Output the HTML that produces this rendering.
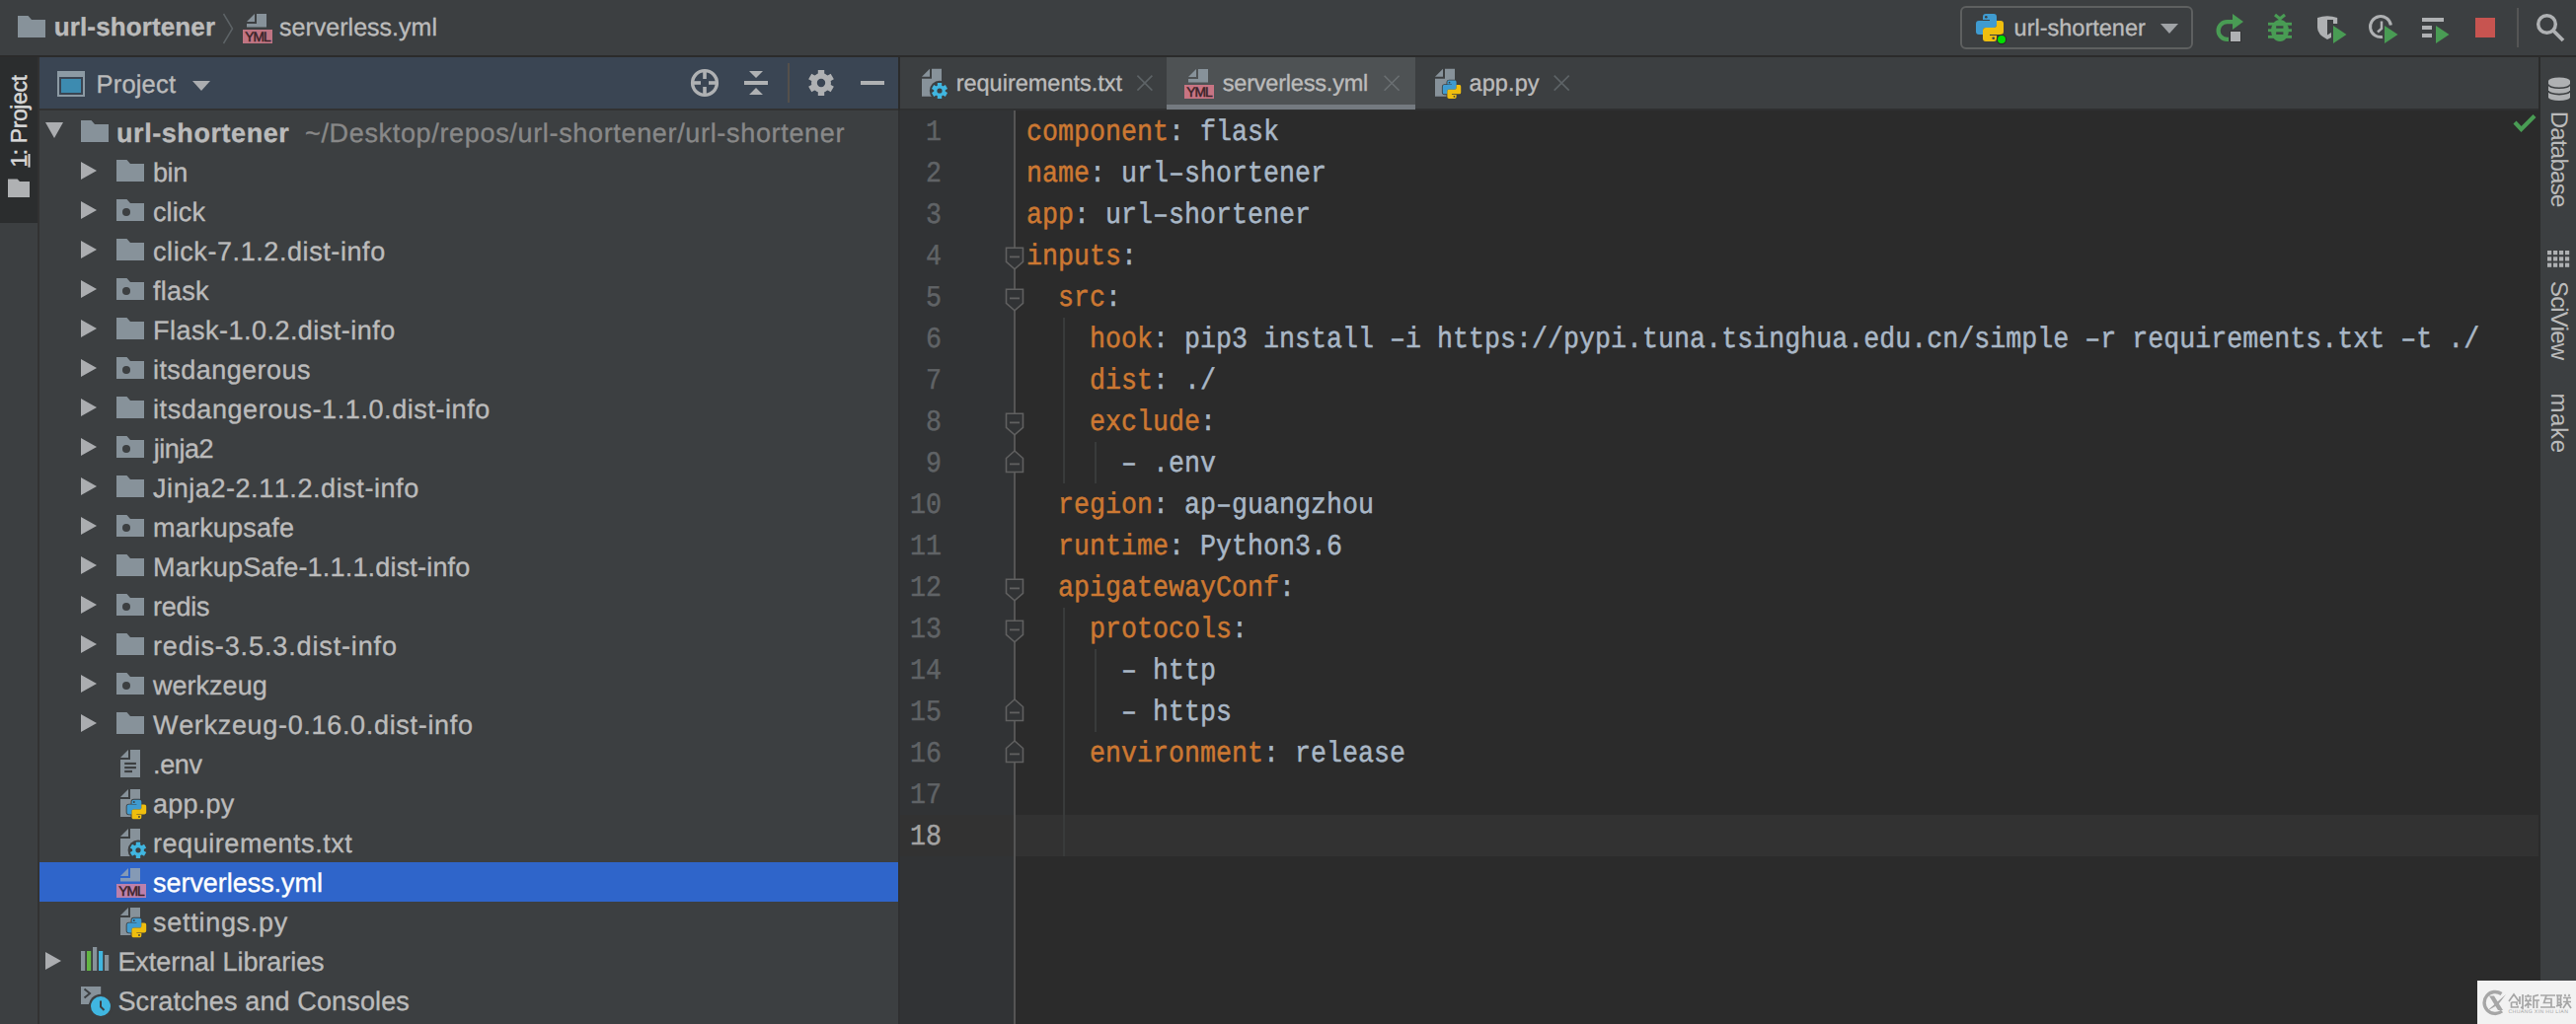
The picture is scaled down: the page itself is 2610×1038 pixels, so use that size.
<!DOCTYPE html>
<html><head><meta charset="utf-8"><style>
html,body{margin:0;padding:0;background:#3C3F41;}
body{width:2610px;height:1038px;overflow:hidden;}
svg{display:block;font-family:"Liberation Sans", sans-serif;font-kerning:none;text-rendering:geometricPrecision;}
text{font-kerning:none;}
</style></head><body>
<svg width="2610" height="1038" viewBox="0 0 2610 1038">
<rect x="0" y="0" width="2610" height="1038" fill="#3C3F41" />
<rect x="0" y="56" width="2610" height="2" fill="#2B2B2B" />
<rect x="38" y="58" width="2" height="980" fill="#323232" />
<rect x="0" y="58" width="38" height="168" fill="#2B2D2E" />
<rect x="40" y="58" width="870" height="52" fill="#3A4553" />
<rect x="40" y="110" width="870" height="2" fill="#323232" />
<rect x="910" y="58" width="2" height="54" fill="#2B2B2B" />
<rect x="910" y="112" width="2" height="926" fill="#2F3031" />
<rect x="912" y="110" width="1660" height="2" fill="#2F3031" />
<rect x="912" y="112" width="116" height="926" fill="#313335" />
<rect x="1029" y="112" width="1543" height="926" fill="#2B2B2B" />
<rect x="1027" y="112" width="2" height="926" fill="#555555" />
<rect x="2572" y="58" width="2" height="980" fill="#2B2B2B" />
<path d="M18,16 h10.5 l3.5,4 h14 v18 h-28 z" fill="#87929A"/>
<text x="54.80" y="36.00" font-size="26" fill="#BBBBBB" letter-spacing="0.117" font-weight="bold"  stroke="#BBBBBB" stroke-width="0.35">url-shortener</text>
<path d="M226.5,14 L235.5,29 L226.5,44" fill="none" stroke="#5D6366" stroke-width="1.5"/>
<path d="M258,14 L250,22 H258 Z" fill="#87929A"/>
<path d="M260,14 H270 V27.5 H250 V24 H260 Z" fill="#87929A"/>
<rect x="246" y="30" width="30" height="14" fill="#C07482"/>
<text x="248.20" y="41.50" font-size="13.8" fill="#3A2329" letter-spacing="-0.936" stroke="#3A2329" stroke-width="0.5">YML</text>
<text x="283.00" y="36.00" font-size="25" fill="#BBBBBB" letter-spacing="0.019"  stroke="#BBBBBB" stroke-width="0.35">serverless.yml</text>
<rect x="1987" y="7" width="234" height="42" rx="5" fill="none" stroke="#5E6060" stroke-width="2"/>
<g transform="translate(2002,14) scale(1.0)"><path d="M7,3 C7,1 8,0 10,0 H18 C20,0 21,1 21,3 V11 C21,13 20,14 18,14 H10 C8,14 7,15 7,17 V21 H3 C1,21 0,20 0,18 V10 C0,8 1,7 3,7 H14 V6 H7 Z" fill="#3C3F41" stroke="#3C3F41" stroke-width="2.6"/><path d="M7,3 C7,1 8,0 10,0 H18 C20,0 21,1 21,3 V11 C21,13 20,14 18,14 H10 C8,14 7,15 7,17 V21 H3 C1,21 0,20 0,18 V10 C0,8 1,7 3,7 H14 V6 H7 Z" transform="rotate(180 14 14)" fill="#3C3F41" stroke="#3C3F41" stroke-width="2.6"/><path d="M7,3 C7,1 8,0 10,0 H18 C20,0 21,1 21,3 V11 C21,13 20,14 18,14 H10 C8,14 7,15 7,17 V21 H3 C1,21 0,20 0,18 V10 C0,8 1,7 3,7 H14 V6 H7 Z" fill="#3F9BD0"/><path d="M7,3 C7,1 8,0 10,0 H18 C20,0 21,1 21,3 V11 C21,13 20,14 18,14 H10 C8,14 7,15 7,17 V21 H3 C1,21 0,20 0,18 V10 C0,8 1,7 3,7 H14 V6 H7 Z" transform="rotate(180 14 14)" fill="#EFBE0E"/><circle cx="10.3" cy="3.3" r="1.3" fill="#3C3F41"/><circle cx="17.7" cy="24.7" r="1.3" fill="#3C3F41"/></g>
<circle cx="2028" cy="40" r="5.2" fill="#2B2B2B"/><circle cx="2028" cy="40" r="4" fill="#00E000"/>
<text x="2040.60" y="36.00" font-size="23.5" fill="#BBBBBB" letter-spacing="-0.002"  stroke="#BBBBBB" stroke-width="0.35">url-shortener</text>
<path d="M2189,24 H2207 L2198,34 Z" fill="#A0A3A6"/>
<path d="M2262,22.1 H2256.5 A8.9,8.9 0 0 0 2256.5,39.9 H2258" fill="none" stroke="#499C54" stroke-width="4.2"/>
<path d="M2262,14 L2273,22 L2262,30 Z" fill="#499C54"/>
<rect x="2259.5" y="31.5" width="11" height="11" fill="#2B2B2B" />
<rect x="2260" y="32" width="10" height="10" fill="#AFB1B3" />
<ellipse cx="2310" cy="31" rx="9" ry="11" fill="#499C54"/>
<rect x="2298" y="22.8" width="24" height="2.9" fill="#499C54" />
<rect x="2298" y="29.3" width="24" height="2.9" fill="#499C54" />
<rect x="2298" y="35.9" width="24" height="2.9" fill="#499C54" />
<path d="M2305,15 L2310,19 L2315,15" fill="none" stroke="#499C54" stroke-width="3.2"/>
<rect x="2306.2" y="26.3" width="7.2" height="2.4" fill="#3C3F41" />
<rect x="2306.2" y="32.4" width="7.2" height="2.5" fill="#3C3F41" />
<path d="M2348,18 Q2358,14.5 2368.2,18 V24 H2364 V20 H2358 V35.4 L2362,33 V38 L2358,40 Q2348,35 2348,28 Z" fill="#AFB1B3"/>
<path d="M2364,26 L2377.5,35 L2364,44 Z" fill="#499C54"/>
<path d="M2422.4,25.5 A10.5,10.5 0 1 0 2414,37.4" fill="none" stroke="#AFB1B3" stroke-width="3"/>
<path d="M2413,21.5 V29 L2409,32.5" fill="none" stroke="#AFB1B3" stroke-width="2.5"/>
<path d="M2416,26 L2429.5,35 L2416,44 Z" fill="#499C54"/>
<rect x="2454" y="18" width="22" height="4" fill="#AFB1B3" />
<rect x="2454" y="26" width="10" height="4" fill="#AFB1B3" />
<rect x="2454" y="34" width="10" height="4" fill="#AFB1B3" />
<path d="M2468,26 L2481.5,35 L2468,44 Z" fill="#499C54"/>
<rect x="2508" y="18" width="20" height="20" fill="#C75450" />
<rect x="2550" y="8" width="2" height="40" fill="#555555" />
<circle cx="2580.5" cy="24.5" r="8.8" fill="none" stroke="#AFB1B3" stroke-width="3.5"/>
<path d="M2587,31 L2597,41" stroke="#AFB1B3" stroke-width="3.8"/>
<g transform="rotate(-90)"><text x="-169.60" y="26.80" font-size="23" fill="#D8D8D8" stroke="#D8D8D8" stroke-width="0.5" letter-spacing="-0.406">1: Project</text></g>
<rect x="28.5" y="156" width="2" height="13.6" fill="#D8D8D8" />
<path d="M8,200 V181.6 h9.6 l2.4,2.4 h10 v16 z" fill="#AFB1B3"/>
<rect x="58" y="72" width="28" height="26" fill="#8C9AA4" />
<rect x="60" y="78" width="24" height="18" fill="#3A4553" />
<rect x="62" y="80" width="20" height="14" fill="#3D8BB0" />
<text x="97.50" y="94.00" font-size="25.5" fill="#BBBBBB" letter-spacing="0.191"  stroke="#BBBBBB" stroke-width="0.35">Project</text>
<path d="M195,82 H213 L204,92 Z" fill="#ABADB0"/>
<circle cx="714" cy="84" r="12.4" fill="none" stroke="#AFB1B3" stroke-width="3.4"/>
<rect x="712.2" y="71" width="3.6" height="9" fill="#AFB1B3" />
<rect x="712.2" y="88" width="3.6" height="9" fill="#AFB1B3" />
<rect x="701" y="82.2" width="9" height="3.6" fill="#AFB1B3" />
<rect x="718" y="82.2" width="9" height="3.6" fill="#AFB1B3" />
<path d="M759,72 H773 L766,79 Z M759,96 H773 L766,89 Z" fill="#AFB1B3"/>
<rect x="754" y="82" width="24" height="4" fill="#AFB1B3" />
<rect x="798" y="64" width="2" height="40" fill="#55504B" />
<rect x="828.8" y="71" width="6.4" height="26" fill="#AFB1B3" transform="rotate(0 832 84)"/><rect x="828.8" y="71" width="6.4" height="26" fill="#AFB1B3" transform="rotate(60 832 84)"/><rect x="828.8" y="71" width="6.4" height="26" fill="#AFB1B3" transform="rotate(120 832 84)"/>
<circle cx="832" cy="84" r="10" fill="#AFB1B3"/><circle cx="832" cy="84" r="4.2" fill="#3A4553"/>
<rect x="872" y="82" width="24" height="4" fill="#AFB1B3" />
<rect x="40" y="874" width="870" height="40" fill="#2F65CA" />
<path d="M46,124 H64 L55,140 Z" fill="#ABADB0"/>
<path d="M82,122 h10.5 l3.5,4 h14 v18 h-28 z" fill="#87929A"/>
<text x="118.00" y="144.00" font-size="27" fill="#BBBBBB" letter-spacing="0.565" font-weight="bold"  stroke="#BBBBBB" stroke-width="0.35">url-shortener</text>
<text x="309.00" y="144.00" font-size="27" fill="#888888" letter-spacing="0.665"  stroke="#888888" stroke-width="0.35">~/Desktop/repos/url-shortener/url-shortener</text>
<path d="M82,164 L98,173 L82,182 Z" fill="#ABADB0"/>
<path d="M118,162 h10.5 l3.5,4 h14 v18 h-28 z" fill="#87929A"/>
<text x="155.00" y="184.00" font-size="27" fill="#BBBBBB" letter-spacing="-0.409"  stroke="#BBBBBB" stroke-width="0.35">bin</text>
<path d="M82,204 L98,213 L82,222 Z" fill="#ABADB0"/>
<path d="M118,202 h10.5 l3.5,4 h14 v18 h-28 z" fill="#87929A"/>
<circle cx="128" cy="215" r="4" fill="#3C3F41"/>
<text x="155.00" y="224.00" font-size="27" fill="#BBBBBB" letter-spacing="0.114"  stroke="#BBBBBB" stroke-width="0.35">click</text>
<path d="M82,244 L98,253 L82,262 Z" fill="#ABADB0"/>
<path d="M118,242 h10.5 l3.5,4 h14 v18 h-28 z" fill="#87929A"/>
<text x="155.00" y="264.00" font-size="27" fill="#BBBBBB" letter-spacing="0.581"  stroke="#BBBBBB" stroke-width="0.35">click-7.1.2.dist-info</text>
<path d="M82,284 L98,293 L82,302 Z" fill="#ABADB0"/>
<path d="M118,282 h10.5 l3.5,4 h14 v18 h-28 z" fill="#87929A"/>
<circle cx="128" cy="295" r="4" fill="#3C3F41"/>
<text x="155.00" y="304.00" font-size="27" fill="#BBBBBB" letter-spacing="0.258"  stroke="#BBBBBB" stroke-width="0.35">flask</text>
<path d="M82,324 L98,333 L82,342 Z" fill="#ABADB0"/>
<path d="M118,322 h10.5 l3.5,4 h14 v18 h-28 z" fill="#87929A"/>
<text x="155.00" y="344.00" font-size="27" fill="#BBBBBB" letter-spacing="0.485"  stroke="#BBBBBB" stroke-width="0.35">Flask-1.0.2.dist-info</text>
<path d="M82,364 L98,373 L82,382 Z" fill="#ABADB0"/>
<path d="M118,362 h10.5 l3.5,4 h14 v18 h-28 z" fill="#87929A"/>
<circle cx="128" cy="375" r="4" fill="#3C3F41"/>
<text x="155.00" y="384.00" font-size="27" fill="#BBBBBB" letter-spacing="0.436"  stroke="#BBBBBB" stroke-width="0.35">itsdangerous</text>
<path d="M82,404 L98,413 L82,422 Z" fill="#ABADB0"/>
<path d="M118,402 h10.5 l3.5,4 h14 v18 h-28 z" fill="#87929A"/>
<text x="155.00" y="424.00" font-size="27" fill="#BBBBBB" letter-spacing="0.578"  stroke="#BBBBBB" stroke-width="0.35">itsdangerous-1.1.0.dist-info</text>
<path d="M82,444 L98,453 L82,462 Z" fill="#ABADB0"/>
<path d="M118,442 h10.5 l3.5,4 h14 v18 h-28 z" fill="#87929A"/>
<circle cx="128" cy="455" r="4" fill="#3C3F41"/>
<text x="155.68" y="464.00" font-size="27" fill="#BBBBBB" letter-spacing="-0.424"  stroke="#BBBBBB" stroke-width="0.35">jinja2</text>
<path d="M82,484 L98,493 L82,502 Z" fill="#ABADB0"/>
<path d="M118,482 h10.5 l3.5,4 h14 v18 h-28 z" fill="#87929A"/>
<text x="155.00" y="504.00" font-size="27" fill="#BBBBBB" letter-spacing="0.571"  stroke="#BBBBBB" stroke-width="0.35">Jinja2-2.11.2.dist-info</text>
<path d="M82,524 L98,533 L82,542 Z" fill="#ABADB0"/>
<path d="M118,522 h10.5 l3.5,4 h14 v18 h-28 z" fill="#87929A"/>
<circle cx="128" cy="535" r="4" fill="#3C3F41"/>
<text x="155.00" y="544.00" font-size="27" fill="#BBBBBB" letter-spacing="0.214"  stroke="#BBBBBB" stroke-width="0.35">markupsafe</text>
<path d="M82,564 L98,573 L82,582 Z" fill="#ABADB0"/>
<path d="M118,562 h10.5 l3.5,4 h14 v18 h-28 z" fill="#87929A"/>
<text x="155.00" y="584.00" font-size="27" fill="#BBBBBB" letter-spacing="0.186"  stroke="#BBBBBB" stroke-width="0.35">MarkupSafe-1.1.1.dist-info</text>
<path d="M82,604 L98,613 L82,622 Z" fill="#ABADB0"/>
<path d="M118,602 h10.5 l3.5,4 h14 v18 h-28 z" fill="#87929A"/>
<circle cx="128" cy="615" r="4" fill="#3C3F41"/>
<text x="155.00" y="624.00" font-size="27" fill="#BBBBBB" letter-spacing="-0.259"  stroke="#BBBBBB" stroke-width="0.35">redis</text>
<path d="M82,644 L98,653 L82,662 Z" fill="#ABADB0"/>
<path d="M118,642 h10.5 l3.5,4 h14 v18 h-28 z" fill="#87929A"/>
<text x="155.00" y="664.00" font-size="27" fill="#BBBBBB" letter-spacing="0.870"  stroke="#BBBBBB" stroke-width="0.35">redis-3.5.3.dist-info</text>
<path d="M82,684 L98,693 L82,702 Z" fill="#ABADB0"/>
<path d="M118,682 h10.5 l3.5,4 h14 v18 h-28 z" fill="#87929A"/>
<circle cx="128" cy="695" r="4" fill="#3C3F41"/>
<text x="155.05" y="704.00" font-size="27" fill="#BBBBBB" letter-spacing="0.012"  stroke="#BBBBBB" stroke-width="0.35">werkzeug</text>
<path d="M82,724 L98,733 L82,742 Z" fill="#ABADB0"/>
<path d="M118,722 h10.5 l3.5,4 h14 v18 h-28 z" fill="#87929A"/>
<text x="155.00" y="744.00" font-size="27" fill="#BBBBBB" letter-spacing="0.681"  stroke="#BBBBBB" stroke-width="0.35">Werkzeug-0.16.0.dist-info</text>
<path d="M130,760 L122,768 H130 Z" fill="#87929A"/>
<path d="M132,760 H142 V788 H122 V770 H132 Z" fill="#87929A"/>
<rect x="126.2" y="772.9" width="11.7" height="2.2" fill="#3C3F41" />
<rect x="126.2" y="777" width="11.7" height="2.2" fill="#3C3F41" />
<rect x="126.2" y="780.9" width="7.8" height="2.2" fill="#3C3F41" />
<text x="155.00" y="784.00" font-size="27" fill="#BBBBBB" letter-spacing="-0.343"  stroke="#BBBBBB" stroke-width="0.35">.env</text>
<path d="M130,800 L122,808 H130 Z" fill="#87929A"/>
<path d="M132,800 H142 V828 H122 V810 H132 Z" fill="#87929A"/>
<g transform="translate(128.6,810.7) scale(0.7)"><path d="M7,3 C7,1 8,0 10,0 H18 C20,0 21,1 21,3 V11 C21,13 20,14 18,14 H10 C8,14 7,15 7,17 V21 H3 C1,21 0,20 0,18 V10 C0,8 1,7 3,7 H14 V6 H7 Z" fill="#3C3F41" stroke="#3C3F41" stroke-width="2.6"/><path d="M7,3 C7,1 8,0 10,0 H18 C20,0 21,1 21,3 V11 C21,13 20,14 18,14 H10 C8,14 7,15 7,17 V21 H3 C1,21 0,20 0,18 V10 C0,8 1,7 3,7 H14 V6 H7 Z" transform="rotate(180 14 14)" fill="#3C3F41" stroke="#3C3F41" stroke-width="2.6"/><path d="M7,3 C7,1 8,0 10,0 H18 C20,0 21,1 21,3 V11 C21,13 20,14 18,14 H10 C8,14 7,15 7,17 V21 H3 C1,21 0,20 0,18 V10 C0,8 1,7 3,7 H14 V6 H7 Z" fill="#3F9BD0"/><path d="M7,3 C7,1 8,0 10,0 H18 C20,0 21,1 21,3 V11 C21,13 20,14 18,14 H10 C8,14 7,15 7,17 V21 H3 C1,21 0,20 0,18 V10 C0,8 1,7 3,7 H14 V6 H7 Z" transform="rotate(180 14 14)" fill="#EFBE0E"/><circle cx="10.3" cy="3.3" r="1.3" fill="#3C3F41"/><circle cx="17.7" cy="24.7" r="1.3" fill="#3C3F41"/></g>
<text x="155.00" y="824.00" font-size="27" fill="#BBBBBB" letter-spacing="0.249"  stroke="#BBBBBB" stroke-width="0.35">app.py</text>
<path d="M130,840 L122,848 H130 Z" fill="#87929A"/>
<path d="M132,840 H142 V868 H122 V850 H132 Z" fill="#87929A"/>
<circle cx="140" cy="861.8" r="10.399999999999999" fill="#3C3F41"/>
<rect x="137.8" y="853.5999999999999" width="4.4" height="16.4" fill="#40B6E0" transform="rotate(0 140 861.8)"/><rect x="137.8" y="853.5999999999999" width="4.4" height="16.4" fill="#40B6E0" transform="rotate(60 140 861.8)"/><rect x="137.8" y="853.5999999999999" width="4.4" height="16.4" fill="#40B6E0" transform="rotate(120 140 861.8)"/>
<circle cx="140" cy="861.8" r="5.903999999999999" fill="#40B6E0"/>
<circle cx="140" cy="861.8" r="2.6" fill="#3C3F41"/>
<text x="155.00" y="864.00" font-size="27" fill="#BBBBBB" letter-spacing="0.549"  stroke="#BBBBBB" stroke-width="0.35">requirements.txt</text>
<path d="M130,880 L122,888 H130 Z" fill="#859AB5"/>
<path d="M132,880 H142 V893.5 H122 V890 H132 Z" fill="#859AB5"/>
<rect x="118" y="896" width="30" height="14" fill="#BC80AB"/>
<text x="120.20" y="907.50" font-size="13.8" fill="#3A2329" letter-spacing="-0.936" stroke="#3A2329" stroke-width="0.5">YML</text>
<text x="155.00" y="904.00" font-size="27" fill="#FFFFFF" letter-spacing="-0.041"  stroke="#FFFFFF" stroke-width="0.35">serverless.yml</text>
<path d="M130,920 L122,928 H130 Z" fill="#87929A"/>
<path d="M132,920 H142 V948 H122 V930 H132 Z" fill="#87929A"/>
<g transform="translate(128.6,930.7) scale(0.7)"><path d="M7,3 C7,1 8,0 10,0 H18 C20,0 21,1 21,3 V11 C21,13 20,14 18,14 H10 C8,14 7,15 7,17 V21 H3 C1,21 0,20 0,18 V10 C0,8 1,7 3,7 H14 V6 H7 Z" fill="#3C3F41" stroke="#3C3F41" stroke-width="2.6"/><path d="M7,3 C7,1 8,0 10,0 H18 C20,0 21,1 21,3 V11 C21,13 20,14 18,14 H10 C8,14 7,15 7,17 V21 H3 C1,21 0,20 0,18 V10 C0,8 1,7 3,7 H14 V6 H7 Z" transform="rotate(180 14 14)" fill="#3C3F41" stroke="#3C3F41" stroke-width="2.6"/><path d="M7,3 C7,1 8,0 10,0 H18 C20,0 21,1 21,3 V11 C21,13 20,14 18,14 H10 C8,14 7,15 7,17 V21 H3 C1,21 0,20 0,18 V10 C0,8 1,7 3,7 H14 V6 H7 Z" fill="#3F9BD0"/><path d="M7,3 C7,1 8,0 10,0 H18 C20,0 21,1 21,3 V11 C21,13 20,14 18,14 H10 C8,14 7,15 7,17 V21 H3 C1,21 0,20 0,18 V10 C0,8 1,7 3,7 H14 V6 H7 Z" transform="rotate(180 14 14)" fill="#EFBE0E"/><circle cx="10.3" cy="3.3" r="1.3" fill="#3C3F41"/><circle cx="17.7" cy="24.7" r="1.3" fill="#3C3F41"/></g>
<text x="155.00" y="944.00" font-size="27" fill="#BBBBBB" letter-spacing="0.724"  stroke="#BBBBBB" stroke-width="0.35">settings.py</text>
<path d="M46,965 L62,974 L46,983 Z" fill="#ABADB0"/>
<rect x="82" y="964" width="4.2" height="20" fill="#87929A"/>
<rect x="88" y="964" width="4.2" height="20" fill="#62B543"/>
<rect x="94" y="960" width="4.2" height="24" fill="#87929A"/>
<rect x="100" y="964" width="4.2" height="20" fill="#40B6E0"/>
<rect x="106" y="968" width="4.2" height="16" fill="#87929A"/>
<text x="119.40" y="984.00" font-size="27" fill="#BBBBBB" letter-spacing="-0.052"  stroke="#BBBBBB" stroke-width="0.35">External Libraries</text>
<rect x="82" y="1000" width="20.2" height="18" fill="#87929A" />
<path d="M85.5,1002.5 L91,1007 L85.5,1011.5" fill="none" stroke="#3C3F41" stroke-width="2"/>
<circle cx="102" cy="1020" r="12.2" fill="#3C3F41"/><circle cx="102" cy="1020" r="10" fill="#40B6E0"/>
<path d="M102,1014.5 V1020.5 L105.5,1024" fill="none" stroke="#3C3F41" stroke-width="2"/>
<text x="119.40" y="1024.00" font-size="27" fill="#BBBBBB" letter-spacing="0.131"  stroke="#BBBBBB" stroke-width="0.35">Scratches and Consoles</text>
<rect x="1182" y="58" width="252" height="52" fill="#4E5254" />
<rect x="1182" y="106" width="252" height="5" fill="#747A80" />
<path d="M942,69.7 L934,77.7 H942 Z" fill="#87929A"/>
<path d="M944,69.7 H954 V97.7 H934 V79.7 H944 Z" fill="#87929A"/>
<circle cx="952" cy="92" r="10.2" fill="#3C3F41"/>
<rect x="949.8" y="84" width="4.4" height="16" fill="#40B6E0" transform="rotate(0 952 92)"/><rect x="949.8" y="84" width="4.4" height="16" fill="#40B6E0" transform="rotate(60 952 92)"/><rect x="949.8" y="84" width="4.4" height="16" fill="#40B6E0" transform="rotate(120 952 92)"/>
<circle cx="952" cy="92" r="5.76" fill="#40B6E0"/>
<circle cx="952" cy="92" r="2.6" fill="#3C3F41"/>
<text x="968.70" y="92.00" font-size="23.5" fill="#BBBBBB" letter-spacing="-0.011"  stroke="#BBBBBB" stroke-width="0.35">requirements.txt</text>
<path d="M1152.4,76.6 L1167.4,91.6 M1167.4,76.6 L1152.4,91.6" stroke="#5D6366" stroke-width="1.6"/>
<path d="M1212,70 L1204,78 H1212 Z" fill="#87929A"/>
<path d="M1214,70 H1224 V83.5 H1204 V80 H1214 Z" fill="#87929A"/>
<rect x="1200" y="86" width="30" height="14" fill="#C77483"/>
<text x="1202.20" y="97.50" font-size="13.8" fill="#3A2329" letter-spacing="-0.936" stroke="#3A2329" stroke-width="0.5">YML</text>
<text x="1238.80" y="92.00" font-size="23.5" fill="#BBBBBB" letter-spacing="-0.205"  stroke="#BBBBBB" stroke-width="0.35">serverless.yml</text>
<path d="M1402.6,76.7 L1417.6,91.7 M1417.6,76.7 L1402.6,91.7" stroke="#6A6F72" stroke-width="1.6"/>
<path d="M1462,69.8 L1454,77.8 H1462 Z" fill="#87929A"/>
<path d="M1464,69.8 H1474 V97.8 H1454 V79.8 H1464 Z" fill="#87929A"/>
<g transform="translate(1461.75,81.5) scale(0.66)"><path d="M7,3 C7,1 8,0 10,0 H18 C20,0 21,1 21,3 V11 C21,13 20,14 18,14 H10 C8,14 7,15 7,17 V21 H3 C1,21 0,20 0,18 V10 C0,8 1,7 3,7 H14 V6 H7 Z" fill="#3C3F41" stroke="#3C3F41" stroke-width="2.6"/><path d="M7,3 C7,1 8,0 10,0 H18 C20,0 21,1 21,3 V11 C21,13 20,14 18,14 H10 C8,14 7,15 7,17 V21 H3 C1,21 0,20 0,18 V10 C0,8 1,7 3,7 H14 V6 H7 Z" transform="rotate(180 14 14)" fill="#3C3F41" stroke="#3C3F41" stroke-width="2.6"/><path d="M7,3 C7,1 8,0 10,0 H18 C20,0 21,1 21,3 V11 C21,13 20,14 18,14 H10 C8,14 7,15 7,17 V21 H3 C1,21 0,20 0,18 V10 C0,8 1,7 3,7 H14 V6 H7 Z" fill="#3F9BD0"/><path d="M7,3 C7,1 8,0 10,0 H18 C20,0 21,1 21,3 V11 C21,13 20,14 18,14 H10 C8,14 7,15 7,17 V21 H3 C1,21 0,20 0,18 V10 C0,8 1,7 3,7 H14 V6 H7 Z" transform="rotate(180 14 14)" fill="#EFBE0E"/><circle cx="10.3" cy="3.3" r="1.3" fill="#3C3F41"/><circle cx="17.7" cy="24.7" r="1.3" fill="#3C3F41"/></g>
<text x="1488.50" y="92.00" font-size="23.5" fill="#BBBBBB" letter-spacing="0.111"  stroke="#BBBBBB" stroke-width="0.35">app.py</text>
<path d="M1574.7,76.6 L1589.7,91.6 M1589.7,76.6 L1574.7,91.6" stroke="#5D6366" stroke-width="1.6"/>
<rect x="1029" y="826" width="1543" height="42" fill="#323232" />
<rect x="912" y="826" width="115" height="42" fill="#323232" />
<rect x="1077" y="322" width="2" height="168" fill="#393B3B" />
<rect x="1109" y="448" width="2" height="42" fill="#393B3B" />
<rect x="1077" y="616" width="2" height="252" fill="#393B3B" />
<rect x="1109" y="658" width="2" height="84" fill="#393B3B" />
<text x="1055.25" y="142" transform="scale(0.8888888888888888,1)" font-family="Liberation Mono" font-size="30" fill="#606366" stroke="#606366" stroke-width="0.45">1</text>
<text x="1170.00" y="142" transform="scale(0.8888888888888888,1)" font-family="Liberation Mono" font-size="30" stroke-width="0.5" xml:space="preserve" style="white-space:pre"><tspan fill="#CC7832" stroke="#CC7832">component</tspan><tspan fill="#A9B7C6" stroke="#A9B7C6">: </tspan><tspan fill="#A9B7C6" stroke="#A9B7C6">flask</tspan></text>
<text x="1055.25" y="184" transform="scale(0.8888888888888888,1)" font-family="Liberation Mono" font-size="30" fill="#606366" stroke="#606366" stroke-width="0.45">2</text>
<text x="1170.00" y="184" transform="scale(0.8888888888888888,1)" font-family="Liberation Mono" font-size="30" stroke-width="0.5" xml:space="preserve" style="white-space:pre"><tspan fill="#CC7832" stroke="#CC7832">name</tspan><tspan fill="#A9B7C6" stroke="#A9B7C6">: </tspan><tspan fill="#A9B7C6" stroke="#A9B7C6">url&#8211;shortener</tspan></text>
<text x="1055.25" y="226" transform="scale(0.8888888888888888,1)" font-family="Liberation Mono" font-size="30" fill="#606366" stroke="#606366" stroke-width="0.45">3</text>
<text x="1170.00" y="226" transform="scale(0.8888888888888888,1)" font-family="Liberation Mono" font-size="30" stroke-width="0.5" xml:space="preserve" style="white-space:pre"><tspan fill="#CC7832" stroke="#CC7832">app</tspan><tspan fill="#A9B7C6" stroke="#A9B7C6">: </tspan><tspan fill="#A9B7C6" stroke="#A9B7C6">url&#8211;shortener</tspan></text>
<text x="1055.25" y="268" transform="scale(0.8888888888888888,1)" font-family="Liberation Mono" font-size="30" fill="#606366" stroke="#606366" stroke-width="0.45">4</text>
<text x="1170.00" y="268" transform="scale(0.8888888888888888,1)" font-family="Liberation Mono" font-size="30" stroke-width="0.5" xml:space="preserve" style="white-space:pre"><tspan fill="#CC7832" stroke="#CC7832">inputs</tspan><tspan fill="#A9B7C6" stroke="#A9B7C6">:</tspan></text>
<text x="1055.25" y="310" transform="scale(0.8888888888888888,1)" font-family="Liberation Mono" font-size="30" fill="#606366" stroke="#606366" stroke-width="0.45">5</text>
<text x="1170.00" y="310" transform="scale(0.8888888888888888,1)" font-family="Liberation Mono" font-size="30" stroke-width="0.5" xml:space="preserve" style="white-space:pre"><tspan fill="#A9B7C6" stroke="#A9B7C6">  </tspan><tspan fill="#CC7832" stroke="#CC7832">src</tspan><tspan fill="#A9B7C6" stroke="#A9B7C6">:</tspan></text>
<text x="1055.25" y="352" transform="scale(0.8888888888888888,1)" font-family="Liberation Mono" font-size="30" fill="#606366" stroke="#606366" stroke-width="0.45">6</text>
<text x="1170.00" y="352" transform="scale(0.8888888888888888,1)" font-family="Liberation Mono" font-size="30" stroke-width="0.5" xml:space="preserve" style="white-space:pre"><tspan fill="#A9B7C6" stroke="#A9B7C6">    </tspan><tspan fill="#CC7832" stroke="#CC7832">hook</tspan><tspan fill="#A9B7C6" stroke="#A9B7C6">: </tspan><tspan fill="#A9B7C6" stroke="#A9B7C6">pip3 install &#8211;i https://pypi.tuna.tsinghua.edu.cn/simple &#8211;r requirements.txt &#8211;t ./</tspan></text>
<text x="1055.25" y="394" transform="scale(0.8888888888888888,1)" font-family="Liberation Mono" font-size="30" fill="#606366" stroke="#606366" stroke-width="0.45">7</text>
<text x="1170.00" y="394" transform="scale(0.8888888888888888,1)" font-family="Liberation Mono" font-size="30" stroke-width="0.5" xml:space="preserve" style="white-space:pre"><tspan fill="#A9B7C6" stroke="#A9B7C6">    </tspan><tspan fill="#CC7832" stroke="#CC7832">dist</tspan><tspan fill="#A9B7C6" stroke="#A9B7C6">: </tspan><tspan fill="#A9B7C6" stroke="#A9B7C6">./</tspan></text>
<text x="1055.25" y="436" transform="scale(0.8888888888888888,1)" font-family="Liberation Mono" font-size="30" fill="#606366" stroke="#606366" stroke-width="0.45">8</text>
<text x="1170.00" y="436" transform="scale(0.8888888888888888,1)" font-family="Liberation Mono" font-size="30" stroke-width="0.5" xml:space="preserve" style="white-space:pre"><tspan fill="#A9B7C6" stroke="#A9B7C6">    </tspan><tspan fill="#CC7832" stroke="#CC7832">exclude</tspan><tspan fill="#A9B7C6" stroke="#A9B7C6">:</tspan></text>
<text x="1055.25" y="478" transform="scale(0.8888888888888888,1)" font-family="Liberation Mono" font-size="30" fill="#606366" stroke="#606366" stroke-width="0.45">9</text>
<text x="1170.00" y="478" transform="scale(0.8888888888888888,1)" font-family="Liberation Mono" font-size="30" stroke-width="0.5" xml:space="preserve" style="white-space:pre"><tspan fill="#A9B7C6" stroke="#A9B7C6">      &#8211; .env</tspan></text>
<text x="1037.25" y="520" transform="scale(0.8888888888888888,1)" font-family="Liberation Mono" font-size="30" fill="#606366" stroke="#606366" stroke-width="0.45">10</text>
<text x="1170.00" y="520" transform="scale(0.8888888888888888,1)" font-family="Liberation Mono" font-size="30" stroke-width="0.5" xml:space="preserve" style="white-space:pre"><tspan fill="#A9B7C6" stroke="#A9B7C6">  </tspan><tspan fill="#CC7832" stroke="#CC7832">region</tspan><tspan fill="#A9B7C6" stroke="#A9B7C6">: </tspan><tspan fill="#A9B7C6" stroke="#A9B7C6">ap&#8211;guangzhou</tspan></text>
<text x="1037.25" y="562" transform="scale(0.8888888888888888,1)" font-family="Liberation Mono" font-size="30" fill="#606366" stroke="#606366" stroke-width="0.45">11</text>
<text x="1170.00" y="562" transform="scale(0.8888888888888888,1)" font-family="Liberation Mono" font-size="30" stroke-width="0.5" xml:space="preserve" style="white-space:pre"><tspan fill="#A9B7C6" stroke="#A9B7C6">  </tspan><tspan fill="#CC7832" stroke="#CC7832">runtime</tspan><tspan fill="#A9B7C6" stroke="#A9B7C6">: </tspan><tspan fill="#A9B7C6" stroke="#A9B7C6">Python3.6</tspan></text>
<text x="1037.25" y="604" transform="scale(0.8888888888888888,1)" font-family="Liberation Mono" font-size="30" fill="#606366" stroke="#606366" stroke-width="0.45">12</text>
<text x="1170.00" y="604" transform="scale(0.8888888888888888,1)" font-family="Liberation Mono" font-size="30" stroke-width="0.5" xml:space="preserve" style="white-space:pre"><tspan fill="#A9B7C6" stroke="#A9B7C6">  </tspan><tspan fill="#CC7832" stroke="#CC7832">apigatewayConf</tspan><tspan fill="#A9B7C6" stroke="#A9B7C6">:</tspan></text>
<text x="1037.25" y="646" transform="scale(0.8888888888888888,1)" font-family="Liberation Mono" font-size="30" fill="#606366" stroke="#606366" stroke-width="0.45">13</text>
<text x="1170.00" y="646" transform="scale(0.8888888888888888,1)" font-family="Liberation Mono" font-size="30" stroke-width="0.5" xml:space="preserve" style="white-space:pre"><tspan fill="#A9B7C6" stroke="#A9B7C6">    </tspan><tspan fill="#CC7832" stroke="#CC7832">protocols</tspan><tspan fill="#A9B7C6" stroke="#A9B7C6">:</tspan></text>
<text x="1037.25" y="688" transform="scale(0.8888888888888888,1)" font-family="Liberation Mono" font-size="30" fill="#606366" stroke="#606366" stroke-width="0.45">14</text>
<text x="1170.00" y="688" transform="scale(0.8888888888888888,1)" font-family="Liberation Mono" font-size="30" stroke-width="0.5" xml:space="preserve" style="white-space:pre"><tspan fill="#A9B7C6" stroke="#A9B7C6">      &#8211; http</tspan></text>
<text x="1037.25" y="730" transform="scale(0.8888888888888888,1)" font-family="Liberation Mono" font-size="30" fill="#606366" stroke="#606366" stroke-width="0.45">15</text>
<text x="1170.00" y="730" transform="scale(0.8888888888888888,1)" font-family="Liberation Mono" font-size="30" stroke-width="0.5" xml:space="preserve" style="white-space:pre"><tspan fill="#A9B7C6" stroke="#A9B7C6">      &#8211; https</tspan></text>
<text x="1037.25" y="772" transform="scale(0.8888888888888888,1)" font-family="Liberation Mono" font-size="30" fill="#606366" stroke="#606366" stroke-width="0.45">16</text>
<text x="1170.00" y="772" transform="scale(0.8888888888888888,1)" font-family="Liberation Mono" font-size="30" stroke-width="0.5" xml:space="preserve" style="white-space:pre"><tspan fill="#A9B7C6" stroke="#A9B7C6">    </tspan><tspan fill="#CC7832" stroke="#CC7832">environment</tspan><tspan fill="#A9B7C6" stroke="#A9B7C6">: </tspan><tspan fill="#A9B7C6" stroke="#A9B7C6">release</tspan></text>
<text x="1037.25" y="814" transform="scale(0.8888888888888888,1)" font-family="Liberation Mono" font-size="30" fill="#606366" stroke="#606366" stroke-width="0.45">17</text>
<text x="1037.25" y="856" transform="scale(0.8888888888888888,1)" font-family="Liberation Mono" font-size="30" fill="#A4A3A3" stroke="#A4A3A3" stroke-width="0.45">18</text>
<path d="M1019.5,251.3 H1036.5 V265.3 L1028,272.8 L1019.5,265.3 Z" fill="#313335" stroke="#606060" stroke-width="1.6"/>
<rect x="1023" y="259.5" width="10" height="1.8" fill="#606060" />
<path d="M1019.5,293.3 H1036.5 V307.3 L1028,314.8 L1019.5,307.3 Z" fill="#313335" stroke="#606060" stroke-width="1.6"/>
<rect x="1023" y="301.5" width="10" height="1.8" fill="#606060" />
<path d="M1019.5,419.3 H1036.5 V433.3 L1028,440.8 L1019.5,433.3 Z" fill="#313335" stroke="#606060" stroke-width="1.6"/>
<rect x="1023" y="427.5" width="10" height="1.8" fill="#606060" />
<path d="M1019.5,587.3 H1036.5 V601.3 L1028,608.8 L1019.5,601.3 Z" fill="#313335" stroke="#606060" stroke-width="1.6"/>
<rect x="1023" y="595.5" width="10" height="1.8" fill="#606060" />
<path d="M1019.5,629.3 H1036.5 V643.3 L1028,650.8 L1019.5,643.3 Z" fill="#313335" stroke="#606060" stroke-width="1.6"/>
<rect x="1023" y="637.5" width="10" height="1.8" fill="#606060" />
<path d="M1019.5,478.5 H1036.5 V464.5 L1028,457 L1019.5,464.5 Z" fill="#313335" stroke="#606060" stroke-width="1.6"/>
<rect x="1023" y="469.5" width="10" height="1.8" fill="#606060" />
<path d="M1019.5,730.5 H1036.5 V716.5 L1028,709 L1019.5,716.5 Z" fill="#313335" stroke="#606060" stroke-width="1.6"/>
<rect x="1023" y="721.5" width="10" height="1.8" fill="#606060" />
<path d="M1019.5,772.5 H1036.5 V758.5 L1028,751 L1019.5,758.5 Z" fill="#313335" stroke="#606060" stroke-width="1.6"/>
<rect x="1023" y="763.5" width="10" height="1.8" fill="#606060" />
<path d="M2548,124 L2554.5,131 L2568,117.5" fill="none" stroke="#499C54" stroke-width="4.2"/>
<path d="M2582,82 a11,3.6 0 0 1 22,0 V98.4 a11,3.6 0 0 1 -22,0 Z" fill="#AFB1B3"/>
<path d="M2582,85.6 a11,3.6 0 0 0 22,0 M2582,92 a11,3.6 0 0 0 22,0" fill="none" stroke="#3C3F41" stroke-width="1.6"/>
<g transform="rotate(90)"><text x="112.70" y="-2584.50" font-size="24" fill="#BBBBBB" letter-spacing="-0.735">Database</text></g>
<rect x="2581" y="254.0" width="4.2" height="4.2" fill="#AFB1B3" />
<rect x="2587" y="254.0" width="4.2" height="4.2" fill="#AFB1B3" />
<rect x="2593" y="254.0" width="4.2" height="4.2" fill="#AFB1B3" />
<rect x="2599" y="254.0" width="4.2" height="4.2" fill="#AFB1B3" />
<rect x="2581" y="260.3" width="4.2" height="4.2" fill="#AFB1B3" />
<rect x="2587" y="260.3" width="4.2" height="4.2" fill="#AFB1B3" />
<rect x="2593" y="260.3" width="4.2" height="4.2" fill="#AFB1B3" />
<rect x="2599" y="260.3" width="4.2" height="4.2" fill="#AFB1B3" />
<rect x="2581" y="266.6" width="4.2" height="4.2" fill="#AFB1B3" />
<rect x="2587" y="266.6" width="4.2" height="4.2" fill="#AFB1B3" />
<rect x="2593" y="266.6" width="4.2" height="4.2" fill="#AFB1B3" />
<rect x="2599" y="266.6" width="4.2" height="4.2" fill="#AFB1B3" />
<g transform="rotate(90)"><text x="285.00" y="-2584.60" font-size="24" fill="#BBBBBB" letter-spacing="-0.881">SciView</text></g>
<g transform="rotate(90)"><text x="398.40" y="-2584.60" font-size="24" fill="#BBBBBB" letter-spacing="0.640">make</text></g>
<rect x="2510" y="994" width="100" height="44" fill="#F2F2F2" />
<path d="M2534.5,1007.5 A11,11 0 1 0 2535,1025" fill="none" stroke="#A6A6A6" stroke-width="3.4"/>
<path d="M2519.5,1025 L2539,1008 L2531,1018.5 Z" fill="#A6A6A6"/>
<path d="M2522,1009.5 H2527 L2536,1024 H2531 Z" fill="#A6A6A6"/>
<path d="M2542.0,1015.0 L2547.0,1008.0 L2552.0,1015.0 M2544.5,1016.0 V1021.0 H2551.0 V1019.5 M2544.5,1016.0 H2550.0 V1019.0 M2553.0,1010.0 V1018.0 M2556.0,1008.0 V1022.0 L2554.0,1021.0" fill="none" stroke="#A6A6A6" stroke-width="1.7"/>
<path d="M2561.5,1008.0 V1010.0 M2558.0,1010.0 H2565.0 M2559.0,1011.5 L2560.0,1014.0 M2564.0,1011.5 L2563.0,1014.0 M2558.0,1014.5 H2565.0 M2561.5,1014.5 V1022.0 M2561.5,1017.0 L2558.0,1020.0 M2561.5,1017.0 L2565.0,1019.0 M2572.0,1008.5 L2567.0,1010.0 V1022.0 M2567.0,1014.0 H2573.0 M2570.5,1014.0 V1022.0" fill="none" stroke="#A6A6A6" stroke-width="1.7"/>
<path d="M2574.0,1009.0 H2589.0 M2574.0,1021.0 H2589.0 M2580.0,1009.0 L2577.5,1016.5 H2585.5 M2578.5,1012.5 H2585.0 V1021.0" fill="none" stroke="#A6A6A6" stroke-width="1.7"/>
<path d="M2590.0,1009.0 H2596.0 M2591.5,1009.0 V1020.0 M2594.5,1009.0 V1022.0 M2591.5,1013.0 H2594.5 M2591.5,1016.5 H2594.5 M2590.0,1020.0 L2596.0,1018.0 M2598.5,1008.0 L2599.5,1010.0 M2603.5,1008.0 L2602.5,1010.0 M2597.0,1011.5 H2605.0 M2597.0,1015.5 H2605.0 M2601.0,1011.5 V1016.0 L2597.0,1022.0 M2601.0,1016.0 L2605.0,1022.0" fill="none" stroke="#A6A6A6" stroke-width="1.7"/>
<text x="2541.5" y="1027.3" font-size="5.2" fill="#A6A6A6" letter-spacing="0.35">CHUANG XIN HU LIAN</text>
</svg>
</body></html>
